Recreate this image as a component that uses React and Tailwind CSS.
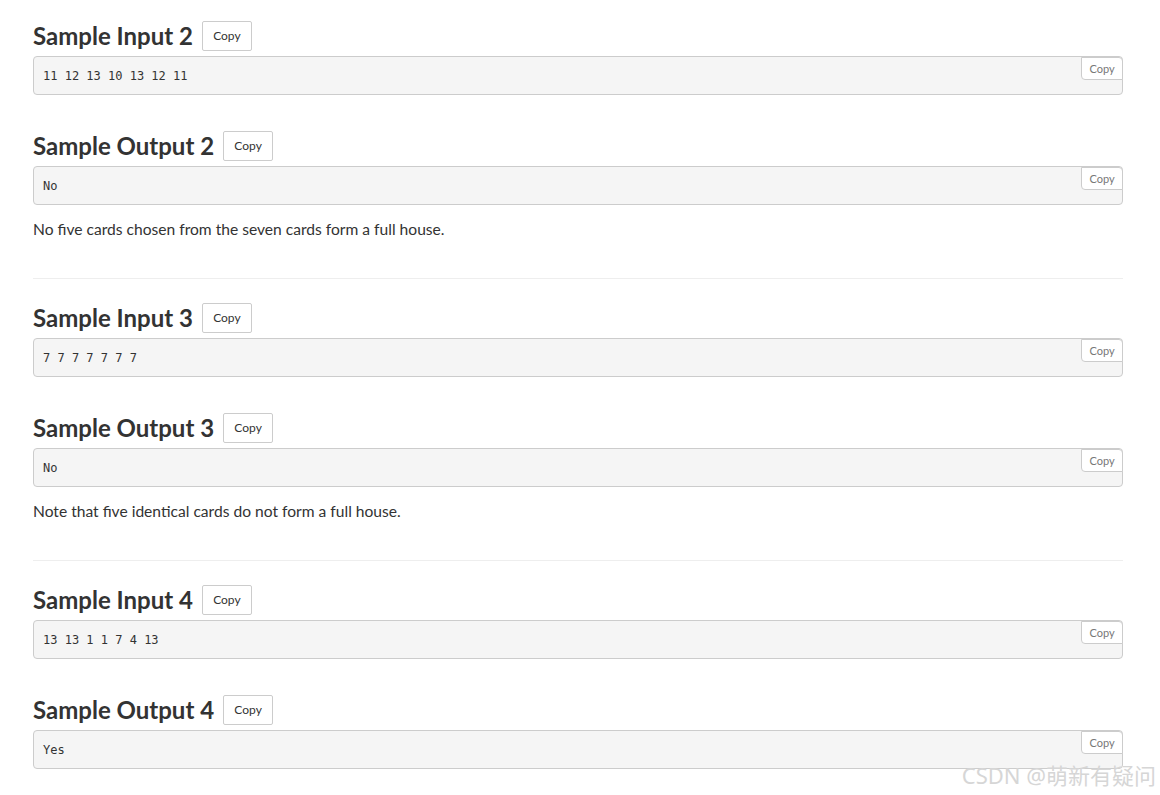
import React from "react";

const samples = [
  { n: 2, input: "11 12 13 10 13 12 11", output: "No", note: "No five cards chosen from the seven cards form a full house." },
  { n: 3, input: "7 7 7 7 7 7 7", output: "No", note: "Note that five identical cards do not form a full house." },
  { n: 4, input: "13 13 1 1 7 4 13", output: "Yes", note: null },
];

function Heading({ children }) {
  return (
    <div className="flex h-[30px] items-center">
      <h3 className="text-[24px] font-bold leading-[30px] text-[#333]">{children}</h3>
      <button className="ml-[9px] h-[30px] w-[50px] rounded-[2px] border border-[#ccc] bg-white text-[12px] text-[#333]">
        Copy
      </button>
    </div>
  );
}

function Pre({ text }) {
  return (
    <div className="relative mt-[5px] h-[39px] rounded-[4px] border border-[#ccc] bg-[#f5f5f5] px-[9px] pt-[10px] font-['DejaVu_Sans_Mono',monospace] text-[12px] leading-[19px] text-[#333]">
      {text}
      <span className="absolute right-[-1px] top-[0px] flex h-[23px] w-[42px] items-center justify-center rounded-bl-[4px] rounded-tr-[4px] border border-[#ccc] bg-white font-['Lato',sans-serif] text-[11px] text-[#777]">
        Copy
      </span>
    </div>
  );
}

export default function App() {
  return (
    <div className="relative min-h-[795px] bg-white font-['Lato',sans-serif] text-[#333]">
      <div className="ml-[33px] w-[1090px] pt-[21px]">
        {samples.map((s, i) => (
          <div key={s.n}>
            {i > 0 && <div className="mb-[24px] mt-[38px] h-px bg-[#eee]" />}
            <Heading>Sample Input {s.n}</Heading>
            <Pre text={s.input} />
            <div className="mt-[36px]">
              <Heading>Sample Output {s.n}</Heading>
            </div>
            <Pre text={s.output} />
            {s.note && <p className="mt-[13px] text-[15.6px] leading-[22px]">{s.note}</p>}
          </div>
        ))}
      </div>
      <div className="absolute bottom-[6px] right-[4px] font-['Noto_Sans','Noto_Sans_CJK_SC',sans-serif] text-[22px] leading-[28px] text-[#d6d6d6]">
        CSDN @萌新有疑问
      </div>
    </div>
  );
}
